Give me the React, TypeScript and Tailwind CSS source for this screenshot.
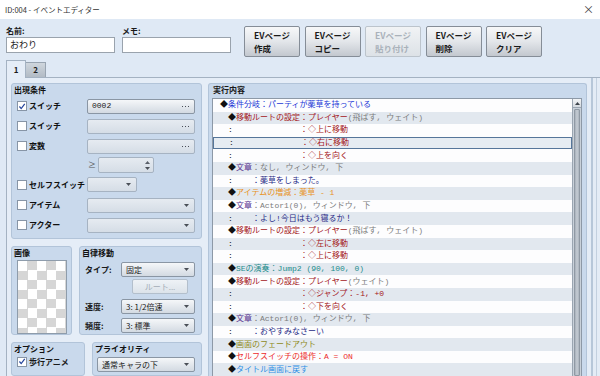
import React from "react";

type Seg = [string, string];
type Row = { lv: 1 | 2; cont?: string; segs: Seg[]; sel?: boolean };

const UI = "font-['Noto_Sans_CJK_JP','Liberation_Sans',sans-serif]";
const MONO = "font-['Liberation_Mono','Noto_Sans_CJK_JP',monospace]";

const C = {
  k: "text-[#111111]",
  blue: "text-[#2136d6]",
  red: "text-[#a4161a]",
  gray: "text-[#7c7c7c]",
  purple: "text-[#56308e]",
  navy: "text-[#272a86]",
  orange: "text-[#e8921e]",
  teal: "text-[#1d8c8c]",
  olive: "text-[#8f8a23]",
  bred: "text-[#ec2a2a]",
  lblue: "text-[#2d8fe6]",
};

const rows: Row[] = [
  { lv: 1, segs: [["◆", C.k], ["条件分岐：パーティが薬草を持っている", C.blue]] },
  { lv: 2, segs: [["◆", C.k], ["移動ルートの設定：プレイヤー", C.red], [" (飛ばす, ウェイト)", C.gray]] },
  { lv: 2, cont: "w-[72px]", segs: [["：◇上に移動", C.red]] },
  { lv: 2, cont: "w-[72px]", segs: [["：◇右に移動", C.red]], sel: true },
  { lv: 2, cont: "w-[72px]", segs: [["：◇上を向く", C.red]] },
  { lv: 2, segs: [["◆", C.k], ["文章", C.purple], ["：なし, ウィンドウ, 下", C.gray]] },
  { lv: 2, cont: "w-[24px]", segs: [["：薬草をしまった。", C.navy]] },
  { lv: 2, segs: [["◆", C.k], ["アイテムの増減：薬草 - 1", C.orange]] },
  { lv: 2, segs: [["◆", C.k], ["文章", C.purple], ["：Actor1(0), ウィンドウ, 下", C.gray]] },
  { lv: 2, cont: "w-[24px]", segs: [["：よし!今日はもう寝るか！", C.navy]] },
  { lv: 2, segs: [["◆", C.k], ["移動ルートの設定：プレイヤー", C.red], [" (飛ばす, ウェイト)", C.gray]] },
  { lv: 2, cont: "w-[72px]", segs: [["：◇左に移動", C.red]] },
  { lv: 2, cont: "w-[72px]", segs: [["：◇上に移動", C.red]] },
  { lv: 2, segs: [["◆", C.k], ["SEの演奏：Jump2 (90, 100, 0)", C.teal]] },
  { lv: 2, segs: [["◆", C.k], ["移動ルートの設定：プレイヤー", C.red], [" (ウェイト)", C.gray]] },
  { lv: 2, cont: "w-[72px]", segs: [["：◇ジャンプ：-1, +0", C.red]] },
  { lv: 2, cont: "w-[72px]", segs: [["：◇下を向く", C.red]] },
  { lv: 2, segs: [["◆", C.k], ["文章", C.purple], ["：Actor1(0), ウィンドウ, 下", C.gray]] },
  { lv: 2, cont: "w-[24px]", segs: [["：おやすみなさーい", C.navy]] },
  { lv: 2, segs: [["◆", C.k], ["画面のフェードアウト", C.olive]] },
  { lv: 2, segs: [["◆", C.k], ["セルフスイッチの操作：A = ON", C.bred]] },
  { lv: 2, segs: [["◆", C.k], ["タイトル画面に戻す", C.lblue]] },
];

function Check({ on }: { on?: boolean }) {
  return (
    <span className="flex h-[10px] w-[10px] shrink-0 items-center justify-center border border-[#8795a6] bg-white">
      {on && (
        <svg viewBox="0 0 10 10" className="h-[9px] w-[9px]">
          <path d="M1.8 5 L4 7.6 L8.4 1.6" fill="none" stroke="#23449c" strokeWidth="1.5" />
        </svg>
      )}
    </span>
  );
}

function Arrow() {
  return (
    <svg viewBox="0 0 5 3" className="h-[3px] w-[5px]">
      <path d="M0 0 L5 0 L2.5 3 Z" fill="#4a4f57" />
    </svg>
  );
}

function Dots() {
  return (
    <svg viewBox="0 0 7 1" className="h-[1px] w-[7px]">
      <rect x="0" y="0" width="1" height="1" fill="#4a4f57" />
      <rect x="3" y="0" width="1" height="1" fill="#4a4f57" />
      <rect x="6" y="0" width="1" height="1" fill="#4a4f57" />
    </svg>
  );
}

function Field({
  w,
  text,
  kind,
  active,
  mono,
}: {
  w: string;
  text?: string;
  kind: "dots" | "arrow";
  active?: boolean;
  mono?: boolean;
}) {
  return (
    <div
      className={`flex h-[15px] ${w} shrink-0 items-center justify-between rounded-[2px] border pl-[4px] pr-[5px] ${
        active
          ? "border-[#8a96a4] bg-linear-to-b from-[#f5f7f9] to-[#d3dae2]"
          : "border-[#a6b3c2] bg-linear-to-b from-[#e6ebf1] to-[#d5dde6]"
      }`}
    >
      <span className={`text-[8px] leading-none text-[#1a1a1a] ${mono ? MONO : ""}`}>{text}</span>
      {kind === "dots" ? <Dots /> : <Arrow />}
    </div>
  );
}

function Group({
  title,
  className,
  children,
}: {
  title: string;
  className: string;
  children?: React.ReactNode;
}) {
  return (
    <div className={`rounded-[3px] border border-[#b2c4d9] bg-[#c9d9ec] ${className}`}>
      <div className="h-[12px] pl-[2px] text-[8px] font-bold leading-[12px] text-[#111]">{title}</div>
      {children}
    </div>
  );
}

function CondRow({
  label,
  on,
  h,
  children,
}: {
  label?: string;
  on?: boolean;
  h: string;
  children?: React.ReactNode;
}) {
  return (
    <div className={`flex ${h} items-center pl-[5px]`}>
      <div className="flex w-[70px] shrink-0 items-center gap-[2px]">
        {label && <Check on={on} />}
        {label && <span className="text-[8px] font-bold text-[#111]">{label}</span>}
      </div>
      {children}
    </div>
  );
}

function EvButton({ a, b, disabled }: { a: string; b: string; disabled?: boolean }) {
  return (
    <div
      className={`flex h-[31px] w-[56px] items-center justify-center rounded-[2px] border ${
        disabled
          ? "border-[#bcc4cc] bg-linear-to-b from-[#f1f3f5] to-[#dde2e7] text-[#a9b1ba]"
          : "border-[#858d97] bg-linear-to-b from-[#f7f8f9] via-[#e3e6ea] to-[#c3c8cf] text-[#1a1a1a]"
      }`}
    >
      <div className="text-[8.5px] font-bold leading-[13px]">
        <div>{a}</div>
        <div>{b}</div>
      </div>
    </div>
  );
}

export default function App() {
  return (
    <div className={`flex h-[376px] w-[600px] flex-col overflow-hidden bg-[#dfe9f5] text-[#1a1a1a] ${UI}`}>
      {/* title bar */}
      <div className="flex h-[19px] shrink-0 items-center justify-between bg-white pl-[5px] pr-[6px]">
        <span className="text-[7.5px] text-[#333]">ID:004 - イベントエディター</span>
        <span className="text-[11px] leading-none text-[#444]">×</span>
      </div>

      {/* name / memo / page buttons */}
      <div className="flex h-[41px] shrink-0 items-start pl-[6px] pt-[6px]">
        <div className="w-[109px]">
          <div className="h-[12px] text-[8px] font-bold leading-[12px]">名前:</div>
          <div className="flex h-[16px] items-center border border-[#9aa3ad] bg-white pl-[3px] text-[9px]">おわり</div>
        </div>
        <div className="ml-[7px] w-[109px]">
          <div className="h-[12px] text-[8px] font-bold leading-[12px]">メモ:</div>
          <div className="h-[16px] border border-[#9aa3ad] bg-white" />
        </div>
        <div className="ml-[13px] mt-[1px] flex gap-[4.5px]">
          <EvButton a="EVページ" b="作成" />
          <EvButton a="EVページ" b="コピー" />
          <EvButton a="EVページ" b="貼り付け" disabled />
          <EvButton a="EVページ" b="削除" />
          <EvButton a="EVページ" b="クリア" />
        </div>
      </div>

      {/* tabs */}
      <div className="flex h-[17px] shrink-0 items-end pl-[6px]">
        <div className="relative z-10 -mb-px flex h-[18px] w-[20px] items-center justify-center border border-b-0 border-[#a4b2c2] bg-[#e5edf7] text-[8px] font-bold">
          1
        </div>
        <div className="flex h-[15px] w-[20px] items-center justify-center border border-b-0 border-l-0 border-[#98a4b1] bg-linear-to-b from-[#cfd6dd] to-[#b2bbc5] text-[8px] font-bold">
          2
        </div>
      </div>

      {/* page body */}
      <div className="ml-[6px] flex min-h-0 flex-1 border-l border-t border-[#a4b2c2] bg-[#e5edf7]">
        {/* left column */}
        <div className="ml-[4px] mt-[5px] flex w-[191px] shrink-0 flex-col">
          <Group title="出現条件" className="pb-[3px]">
            <CondRow label="スイッチ" on h="h-[20px]">
              <Field w="w-[108px]" text="0002" kind="dots" active mono />
            </CondRow>
            <CondRow label="スイッチ" h="h-[20px]">
              <Field w="w-[108px]" kind="dots" />
            </CondRow>
            <CondRow label="変数" h="h-[20px]">
              <Field w="w-[108px]" kind="dots" />
            </CondRow>
            <CondRow h="h-[18px]">
              <span className="w-[11px] pl-[1px] text-[8px] text-[#555]">≥</span>
              <div className="flex h-[16px] w-[56px] items-center justify-end rounded-[2px] border border-[#a6b3c2] bg-linear-to-b from-[#e6ebf1] to-[#d5dde6] pr-[3px]">
                <div className="flex flex-col gap-[3px]">
                  <svg viewBox="0 0 5 3" className="h-[3px] w-[5px]">
                    <path d="M0 3 L5 3 L2.5 0 Z" fill="#5a606a" />
                  </svg>
                  <Arrow />
                </div>
              </div>
            </CondRow>
            <CondRow label="セルフスイッチ" h="h-[21px]">
              <Field w="w-[50px]" kind="arrow" />
            </CondRow>
            <CondRow label="アイテム" h="h-[20px]">
              <Field w="w-[108px]" kind="arrow" />
            </CondRow>
            <CondRow label="アクター" h="h-[20px]">
              <Field w="w-[108px]" kind="arrow" />
            </CondRow>
          </Group>

          <div className="mt-[7px] flex h-[93px] gap-[7px]">
            <Group title="画像" className="w-[61px]">
              <div className="ml-[5px] mt-[1px] h-[74px] w-[50px] border border-[#8e9cab] bg-[conic-gradient(#d6d6d6_25%,#ffffff_0_50%,#d6d6d6_0_75%,#ffffff_0)] bg-[length:19px_19px]" />
            </Group>
            <Group title="自律移動" className="w-[123px]">
              <div className="mt-[3px] flex h-[15px] items-center pl-[5px]">
                <span className="w-[36px] text-[8px] font-bold">タイプ:</span>
                <Field w="w-[74px]" text="固定" kind="arrow" active />
              </div>
              <div className="ml-[52px] mt-[2px] flex h-[15px] w-[56px] items-center justify-center rounded-[2px] border border-[#b3bfcc] bg-linear-to-b from-[#eef2f6] to-[#dce3ea] text-[8px] text-[#a4adb7]">
                ルート...
              </div>
              <div className="mt-[5px] flex h-[15px] items-center pl-[5px]">
                <span className="w-[36px] text-[8px] font-bold">速度:</span>
                <Field w="w-[74px]" text="3: 1/2倍速" kind="arrow" active />
              </div>
              <div className="mt-[4px] flex h-[15px] items-center pl-[5px]">
                <span className="w-[36px] text-[8px] font-bold">頻度:</span>
                <Field w="w-[74px]" text="3: 標準" kind="arrow" active />
              </div>
            </Group>
          </div>

          <div className="mt-[7px] flex h-[40px] gap-[7px]">
            <Group title="オプション" className="w-[74px]">
              <div className="flex h-[13px] items-center gap-[2px] pl-[5px]">
                <Check on />
                <span className="text-[8px] font-bold">歩行アニメ</span>
              </div>
            </Group>
            <Group title="プライオリティ" className="w-[110px]">
              <div className="mt-[2px] pl-[4px]">
                <Field w="w-[98px]" text="通常キャラの下" kind="arrow" active />
              </div>
            </Group>
          </div>
        </div>

        {/* right column */}
        <div className="ml-[6px] mt-[5px] flex w-[379px] shrink-0 flex-col rounded-t-[3px] border border-b-0 border-[#b2c4d9] bg-[#c9d9ec] pl-[3px] pr-[4px]">
          <div className="h-[12px] pl-[1px] text-[8px] font-bold leading-[12px]">実行内容</div>
          <div className="mt-[2px] flex min-h-0 flex-1 border border-b-0 border-[#8d99a7] bg-white">
            <div className={`min-w-0 flex-1 text-[8px] ${MONO}`}>
              {rows.map((r, i) => (
                <div
                  key={i}
                  className={`flex h-[12.6px] items-center whitespace-nowrap leading-none ${
                    r.sel
                      ? "border border-[#56769a] bg-[#e6ecf2]"
                      : i % 2
                      ? "bg-[#e2e8ef]"
                      : "bg-[#fdfdfe]"
                  }`}
                >
                  <span className={`shrink-0 ${r.lv === 1 ? "w-[7px]" : "w-[15px]"}`} />
                  {r.cont && <span className={`inline-block shrink-0 ${r.cont} ${C.k}`}>:</span>}
                  {r.segs.map((s, j) => (
                    <span key={j} className={s[1]}>
                      {s[0]}
                    </span>
                  ))}
                </div>
              ))}
            </div>
            {/* scrollbar */}
            <div className="flex w-[9px] shrink-0 flex-col border-l border-[#9aa5b1] bg-[#c9d1da]">
              <div className="flex h-[9px] items-center justify-center border-b border-[#9aa5b1] bg-linear-to-b from-[#f2f4f6] to-[#d5dae0]">
                <svg viewBox="0 0 5 3" className="h-[3px] w-[5px]">
                  <path d="M0 3 L5 3 L2.5 0 Z" fill="#3d434b" />
                </svg>
              </div>
              <div className="mx-px mt-px flex-1 rounded-[1px] border border-[#8f99a4] bg-linear-to-r from-[#a7b0ba] via-[#c5ccd4] to-[#aab3bd]" />
            </div>
          </div>
        </div>

        {/* window frame on the right */}
        <div className="flex w-[13px] shrink-0 bg-[#e4ecf6]">
          <div className="ml-[4px] w-[2px] bg-[#b7c7d9]" />
          <div className="ml-[3px] w-px bg-[#c3d0df]" />
        </div>
      </div>
    </div>
  );
}
